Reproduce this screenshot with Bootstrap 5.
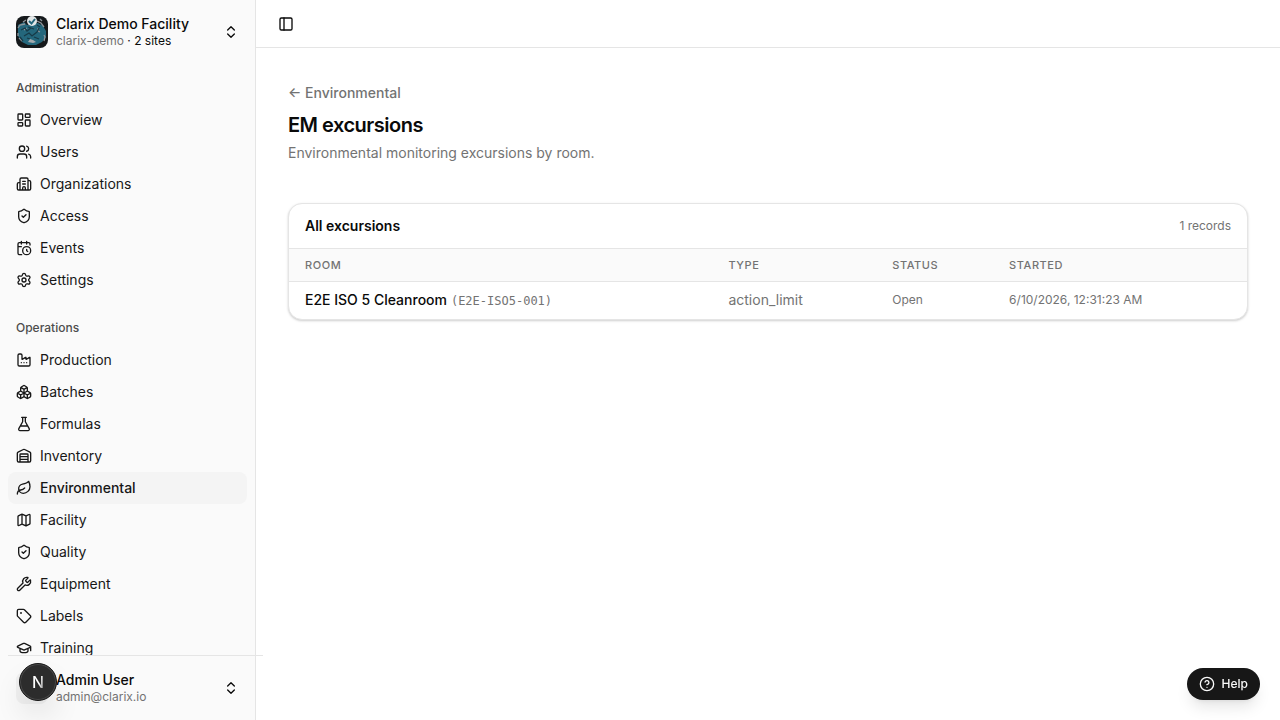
<!DOCTYPE html>
<html lang="en">
<head>
<meta charset="utf-8">
<meta name="viewport" content="width=device-width, initial-scale=1">
<title>EM excursions</title>
<link href="https://cdn.jsdelivr.net/npm/bootstrap@5.3.0/dist/css/bootstrap.min.css" rel="stylesheet">
<style>
  :root { --ink: #0a0a0a; --muted: #737373; --line: #e5e5e5; --side: #fafafa; }
  body { font-family: Inter, "Liberation Sans", sans-serif; font-size: 14px; line-height: 20px; color: var(--ink); background: #fff; }
  .icon { width: 16px; height: 16px; flex: none; fill: none; stroke: currentColor; stroke-width: 2; stroke-linecap: round; stroke-linejoin: round; }
  .quiet { color: var(--muted); }
  .fs-12 { font-size: 12px; line-height: 16px; }
  .medium { font-weight: 500; }

  .sidebar { width: 256px; background: var(--side); border-right: 1px solid var(--line); }
  .side-scroll { min-height: 0; overflow-y: auto; scrollbar-width: none; }
  .side-scroll::-webkit-scrollbar { display: none; }
  .switcher { height: 48px; border: 0; background: none; color: var(--ink); border-radius: 8px; }
  .switcher-name { line-height: 18px; }
  .side-label { height: 32px; color: #4d4d4d; font-size: 12px; font-weight: 500; margin: 0; }
  .side-link { height: 32px; border-radius: 8px; color: #171717; text-decoration: none; }
  .side-link:hover, .side-link.active { background: #f4f4f4; }
  .side-link.active { font-weight: 500; }
  .side-rule { width: 100%; height: 1px; flex: none; background: var(--line); }
  .avatar { width: 32px; height: 32px; flex: none; border-radius: 8px; background: #f0f0f0; }

  .topbar { height: 48px; border-bottom: 1px solid var(--line); }
  .icon-btn { width: 28px; height: 28px; border: 0; background: none; color: var(--ink); }
  .back-row { line-height: 26px; }
  .back-link { color: var(--muted); text-decoration: none; }
  .page-title { font-size: 20px; line-height: 30px; font-weight: 600; letter-spacing: -0.025em; }
  .page-intro { margin: 3px 0 40px; }
  .panel { border: 1px solid var(--line); border-radius: 14px; box-shadow: 0 1px 3px rgba(0,0,0,.1), 0 1px 2px rgba(0,0,0,.1); overflow: hidden; }
  .panel-head { height: 44px; }
  .panel-title { font-size: 14px; line-height: 20px; font-weight: 600; }
  .data { width: 100%; border-collapse: collapse; }
  .data th { height: 33px; padding: 0 16px; font-size: 11px; line-height: 16px; font-weight: 500; letter-spacing: .05em; text-transform: uppercase; color: var(--muted); background: var(--side); border-top: 1px solid var(--line); border-bottom: 1px solid var(--line); }
  .data td { height: 37px; padding: 0 16px; }
  .code { font-family: "DejaVu Sans Mono", "Liberation Mono", monospace; font-size: 12px; line-height: 16px; }
  .c-room { width: 44.2%; } .c-type { width: 17.1%; } .c-status { width: 12.2%; }

  .dev-btn { left: 19px; bottom: 19px; width: 38px; height: 38px; z-index: 20; border: 1px solid #171717; background: #2c2c2c; box-shadow: inset 0 0 0 1px #4a4a4a, 0 16px 32px -8px rgba(0,0,0,.24); }
  .dev-mark { font-size: 16px; line-height: 16px; font-weight: 500; background: linear-gradient(100deg, #fff 60%, #777 100%); -webkit-background-clip: text; background-clip: text; color: transparent; }
  .help-btn { right: 20px; bottom: 20px; height: 32px; padding: 0 12px; gap: 7px; border: 0; background: #171717; color: #fafafa; box-shadow: 0 10px 15px -3px rgba(0,0,0,.1), 0 4px 6px -4px rgba(0,0,0,.1); }
</style>
</head>
<body>
<div class="d-flex vh-100">
  <aside class="sidebar d-flex flex-column flex-shrink-0 vh-100">
    <div class="p-2">
      <button type="button" class="switcher d-flex align-items-center gap-2 w-100 p-2 text-start">
        <svg width="32" height="32" viewBox="0 0 32 32" class="flex-shrink-0" aria-hidden="true">
          <defs><clipPath id="crest"><rect width="32" height="32" rx="8"/></clipPath></defs>
          <g clip-path="url(#crest)">
            <rect width="32" height="32" fill="#15191b"/>
            <path d="M2 9 8 6 11 9 16 8 22 7 27 10 30 15 30 21 26 26 20 29 12 29 6 26 2 20Z" fill="#24677c"/>
            <g fill="none" stroke="#8d9499" stroke-width="1.3">
              <path d="M2 12 4 9 9 8M10 4 7 6M21 5l4 2 3 4M24 3l2 2M2 17v3M3 22l3 3M28 19l1 2-1 4M22 12v3l2 1M8 14l3-2"/>
            </g>
            <g fill="none" stroke="#173b48" stroke-width="1.3">
              <path d="m5 14 4-2 2 3 4-3M8 20l5-3 3 3 5-4 2-4M12 11l6 2M18 21l5 2M4 21l3 4M21 9l3 2M11 22l3 1"/>
            </g>
            <path d="m12 26 2-3 3 1 3 2-3 1Z" fill="#a4aaad"/>
            <circle cx="16" cy="5" r="5" fill="#e3e7e8"/>
            <path d="m13 5 2.500 2.500L19 3" fill="none" stroke="#24677c" stroke-width="2"/>
          </g>
        </svg>
        <span class="d-flex flex-column flex-grow-1">
          <span class="switcher-name medium">Clarix Demo Facility</span>
          <span class="fs-12"><span class="quiet">clarix-demo</span> · 2 sites</span>
        </span>
        <svg class="icon" viewBox="0 0 24 24"><path d="m7 15 5 5 5-5M7 9l5-5 5 5"/></svg>
      </button>
    </div>

    <nav class="side-scroll flex-grow-1" aria-label="Main">
      <div class="p-2">
        <h2 class="side-label d-flex align-items-center px-2">Administration</h2>
        <a href="#" class="side-link d-flex align-items-center gap-2 px-2"><svg class="icon" viewBox="0 0 24 24"><rect width="7" height="9" x="3" y="3" rx="1"/><rect width="7" height="5" x="14" y="3" rx="1"/><rect width="7" height="9" x="14" y="12" rx="1"/><rect width="7" height="5" x="3" y="16" rx="1"/></svg>Overview</a>
        <a href="#" class="side-link d-flex align-items-center gap-2 px-2"><svg class="icon" viewBox="0 0 24 24"><path d="M16 21v-2a4 4 0 0 0-4-4H6a4 4 0 0 0-4 4v2M16 3.128a4 4 0 0 1 0 7.744M22 21v-2a4 4 0 0 0-3-3.87"/><circle cx="9" cy="7" r="4"/></svg>Users</a>
        <a href="#" class="side-link d-flex align-items-center gap-2 px-2"><svg class="icon" viewBox="0 0 24 24"><path d="M10 12h4M10 8h4M14 21v-3a2 2 0 0 0-4 0v3M6 10H4a2 2 0 0 0-2 2v7a2 2 0 0 0 2 2h16a2 2 0 0 0 2-2V9a2 2 0 0 0-2-2h-2M6 21V5a2 2 0 0 1 2-2h8a2 2 0 0 1 2 2v16"/></svg>Organizations</a>
        <a href="#" class="side-link d-flex align-items-center gap-2 px-2"><svg class="icon" viewBox="0 0 24 24"><path d="M20 13c0 5-3.500 7.500-7.660 8.950a1 1 0 0 1-.67-.01C7.500 20.500 4 18 4 13V6a1 1 0 0 1 1-1c2 0 4.500-1.200 6.240-2.720a1.170 1.170 0 0 1 1.520 0C14.510 3.810 17 5 19 5a1 1 0 0 1 1 1z"/><path d="m9 12 2 2 4-4"/></svg>Access</a>
        <a href="#" class="side-link d-flex align-items-center gap-2 px-2"><svg class="icon" viewBox="0 0 24 24"><path d="M16 14v2.200l1.600 1M16 2v4M21 7.500V6a2 2 0 0 0-2-2H5a2 2 0 0 0-2 2v14a2 2 0 0 0 2 2h3.500M3 10h5M8 2v4"/><circle cx="16" cy="16" r="6"/></svg>Events</a>
        <a href="#" class="side-link d-flex align-items-center gap-2 px-2"><svg class="icon" viewBox="0 0 24 24"><path d="M9.671 4.136a2.340 2.340 0 0 1 4.659 0 2.340 2.340 0 0 0 3.319 1.915 2.340 2.340 0 0 1 2.330 4.033 2.340 2.340 0 0 0 0 3.831 2.340 2.340 0 0 1-2.330 4.033 2.340 2.340 0 0 0-3.319 1.915 2.340 2.340 0 0 1-4.659 0 2.340 2.340 0 0 0-3.320-1.915 2.340 2.340 0 0 1-2.330-4.033 2.340 2.340 0 0 0 0-3.831A2.340 2.340 0 0 1 6.350 6.051a2.340 2.340 0 0 0 3.319-1.915"/><circle cx="12" cy="12" r="3"/></svg>Settings</a>
      </div>
      <div class="p-2">
        <h2 class="side-label d-flex align-items-center px-2">Operations</h2>
        <a href="#" class="side-link d-flex align-items-center gap-2 px-2"><svg class="icon" viewBox="0 0 24 24"><path d="M12 16h.01M16 16h.01M8 16h.01M3 19a2 2 0 0 0 2 2h14a2 2 0 0 0 2-2V8.500a.5.5 0 0 0-.769-.422l-4.462 2.844A.5.5 0 0 1 15 10.500v-2a.5.5 0 0 0-.769-.422L9.770 10.922A.5.5 0 0 1 9 10.500V5a2 2 0 0 0-2-2H5a2 2 0 0 0-2 2z"/></svg>Production</a>
        <a href="#" class="side-link d-flex align-items-center gap-2 px-2"><svg class="icon" viewBox="0 0 24 24"><path d="M2.970 12.920A2 2 0 0 0 2 14.630v3.240a2 2 0 0 0 .970 1.710l3 1.800a2 2 0 0 0 2.060 0L12 19v-5.500l-5-3-4.030 2.420ZM7 16.500l-4.740-2.850M7 16.500l5-3M7 16.500v5.170M12 13.500V19l3.970 2.380a2 2 0 0 0 2.060 0l3-1.800a2 2 0 0 0 .970-1.710v-3.240a2 2 0 0 0-.970-1.710L17 10.500l-5 3ZM17 16.500l-5-3M17 16.500l4.740-2.850M17 16.500v5.170M7.970 4.420A2 2 0 0 0 7 6.130v4.370l5 3 5-3V6.130a2 2 0 0 0-.970-1.710l-3-1.800a2 2 0 0 0-2.060 0l-3 1.800ZM12 8 7.260 5.150M12 8l4.740-2.850M12 13.500V8"/></svg>Batches</a>
        <a href="#" class="side-link d-flex align-items-center gap-2 px-2"><svg class="icon" viewBox="0 0 24 24"><path d="M14 2v6a2 2 0 0 0 .245.960l5.510 10.080A2 2 0 0 1 18 22H6a2 2 0 0 1-1.755-2.960l5.510-10.080A2 2 0 0 0 10 8V2M6.453 15h11.094M8.500 2h7"/></svg>Formulas</a>
        <a href="#" class="side-link d-flex align-items-center gap-2 px-2"><svg class="icon" viewBox="0 0 24 24"><path d="M18 21V10a1 1 0 0 0-1-1H7a1 1 0 0 0-1 1v11M22 19a2 2 0 0 1-2 2H4a2 2 0 0 1-2-2V8a2 2 0 0 1 1.132-1.803l7.950-3.974a2 2 0 0 1 1.837 0l7.948 3.974A2 2 0 0 1 22 8zM6 13h12M6 17h12"/></svg>Inventory</a>
        <a href="#" class="side-link active d-flex align-items-center gap-2 px-2" aria-current="page"><svg class="icon" viewBox="0 0 24 24"><path d="M11 20A7 7 0 0 1 9.800 6.100C15.500 5 17 4.480 19 2c1 2 2 4.180 2 8 0 5.500-4.780 10-10 10ZM2 21c0-3 1.850-5.360 5.080-6C9.500 14.520 12 13 13 12"/></svg>Environmental</a>
        <a href="#" class="side-link d-flex align-items-center gap-2 px-2"><svg class="icon" viewBox="0 0 24 24"><path d="M14.106 5.553a2 2 0 0 0 1.788 0l3.659-1.830A1 1 0 0 1 21 4.619v12.764a1 1 0 0 1-.553.894l-4.553 2.277a2 2 0 0 1-1.788 0l-4.212-2.106a2 2 0 0 0-1.788 0l-3.659 1.830A1 1 0 0 1 3 19.381V6.618a1 1 0 0 1 .553-.894l4.553-2.277a2 2 0 0 1 1.788 0zM15 5.764v15M9 3.236v15"/></svg>Facility</a>
        <a href="#" class="side-link d-flex align-items-center gap-2 px-2"><svg class="icon" viewBox="0 0 24 24"><path d="M20 13c0 5-3.500 7.500-7.660 8.950a1 1 0 0 1-.67-.01C7.500 20.500 4 18 4 13V6a1 1 0 0 1 1-1c2 0 4.500-1.200 6.240-2.720a1.170 1.170 0 0 1 1.520 0C14.510 3.810 17 5 19 5a1 1 0 0 1 1 1z"/><path d="m9 12 2 2 4-4"/></svg>Quality</a>
        <a href="#" class="side-link d-flex align-items-center gap-2 px-2"><svg class="icon" viewBox="0 0 24 24"><path d="M14.700 6.300a1 1 0 0 0 0 1.400l1.600 1.600a1 1 0 0 0 1.400 0l3.106-3.105c.32-.322.863-.22.983.218a6 6 0 0 1-8.259 7.057l-7.910 7.910a1 1 0 0 1-2.999-3l7.910-7.910a6 6 0 0 1 7.057-8.259c.438.12.54.662.219.984z"/></svg>Equipment</a>
        <a href="#" class="side-link d-flex align-items-center gap-2 px-2"><svg class="icon" viewBox="0 0 24 24"><path d="M12.586 2.586A2 2 0 0 0 11.172 2H4a2 2 0 0 0-2 2v7.172a2 2 0 0 0 .586 1.414l8.704 8.704a2.426 2.426 0 0 0 3.420 0l6.580-6.580a2.426 2.426 0 0 0 0-3.420z"/><circle cx="7.500" cy="7.500" r=".5" fill="currentColor"/></svg>Labels</a>
        <a href="#" class="side-link d-flex align-items-center gap-2 px-2"><svg class="icon" viewBox="0 0 24 24"><path d="M21.420 10.922a1 1 0 0 0-.019-1.838L12.830 5.180a2 2 0 0 0-1.660 0L2.600 9.080a1 1 0 0 0 0 1.832l8.570 3.908a2 2 0 0 0 1.660 0zM22 10v6M6 12.500V16a6 3 0 0 0 12 0v-3.500"/></svg>Training</a>
      </div>
    </nav>

    <div class="side-rule mx-2"></div>
    <div class="p-2">
      <button type="button" class="switcher d-flex align-items-center gap-2 w-100 p-2 text-start">
        <span class="avatar"></span>
        <span class="d-flex flex-column flex-grow-1">
          <span class="switcher-name medium">Admin User</span>
          <span class="fs-12 quiet">admin@clarix.io</span>
        </span>
        <svg class="icon" viewBox="0 0 24 24"><path d="m7 15 5 5 5-5M7 9l5-5 5 5"/></svg>
      </button>
    </div>
  </aside>

  <div class="flex-grow-1 overflow-auto">
    <header class="topbar d-flex align-items-center px-3">
      <button type="button" class="icon-btn d-flex align-items-center justify-content-center p-0" aria-label="Toggle sidebar">
        <svg class="icon" viewBox="0 0 24 24"><rect width="18" height="18" x="3" y="3" rx="2"/><path d="M9 3v18"/></svg>
      </button>
    </header>
    <main class="p-4">
      <div class="p-2">
        <div class="back-row"><a href="#" class="back-link medium">← Environmental</a></div>
        <h1 class="page-title mt-1 mb-0">EM excursions</h1>
        <p class="page-intro quiet">Environmental monitoring excursions by room.</p>

        <section class="panel bg-white">
          <div class="panel-head d-flex align-items-center justify-content-between px-3">
            <h2 class="panel-title m-0">All excursions</h2>
            <span class="fs-12 quiet">1 records</span>
          </div>
          <table class="data">
            <thead>
              <tr><th scope="col" class="c-room">Room</th><th scope="col" class="c-type">Type</th><th scope="col" class="c-status">Status</th><th scope="col">Started</th></tr>
            </thead>
            <tbody>
              <tr>
                <td><span class="medium">E2E ISO 5 Cleanroom</span> <span class="code quiet">(E2E-ISO5-001)</span></td>
                <td class="quiet">action_limit</td>
                <td class="quiet fs-12">Open</td>
                <td class="quiet fs-12">6/10/2026, 12:31:23 AM</td>
              </tr>
            </tbody>
          </table>
        </section>
      </div>
    </main>
  </div>
</div>

<button type="button" class="dev-btn position-fixed rounded-circle d-flex align-items-center justify-content-center p-0" aria-label="Open developer tools"><span class="dev-mark">N</span></button>
<button type="button" class="help-btn position-fixed rounded-pill d-flex align-items-center medium fs-12">
  <svg class="icon" viewBox="0 0 24 24"><circle cx="12" cy="12" r="10"/><path d="M9.090 9a3 3 0 0 1 5.830 1c0 2-3 3-3 3M12 17h.01"/></svg><span>Help</span>
</button>
<script src="https://cdn.jsdelivr.net/npm/bootstrap@5.3.0/dist/js/bootstrap.bundle.min.js"></script>
</body>
</html>
